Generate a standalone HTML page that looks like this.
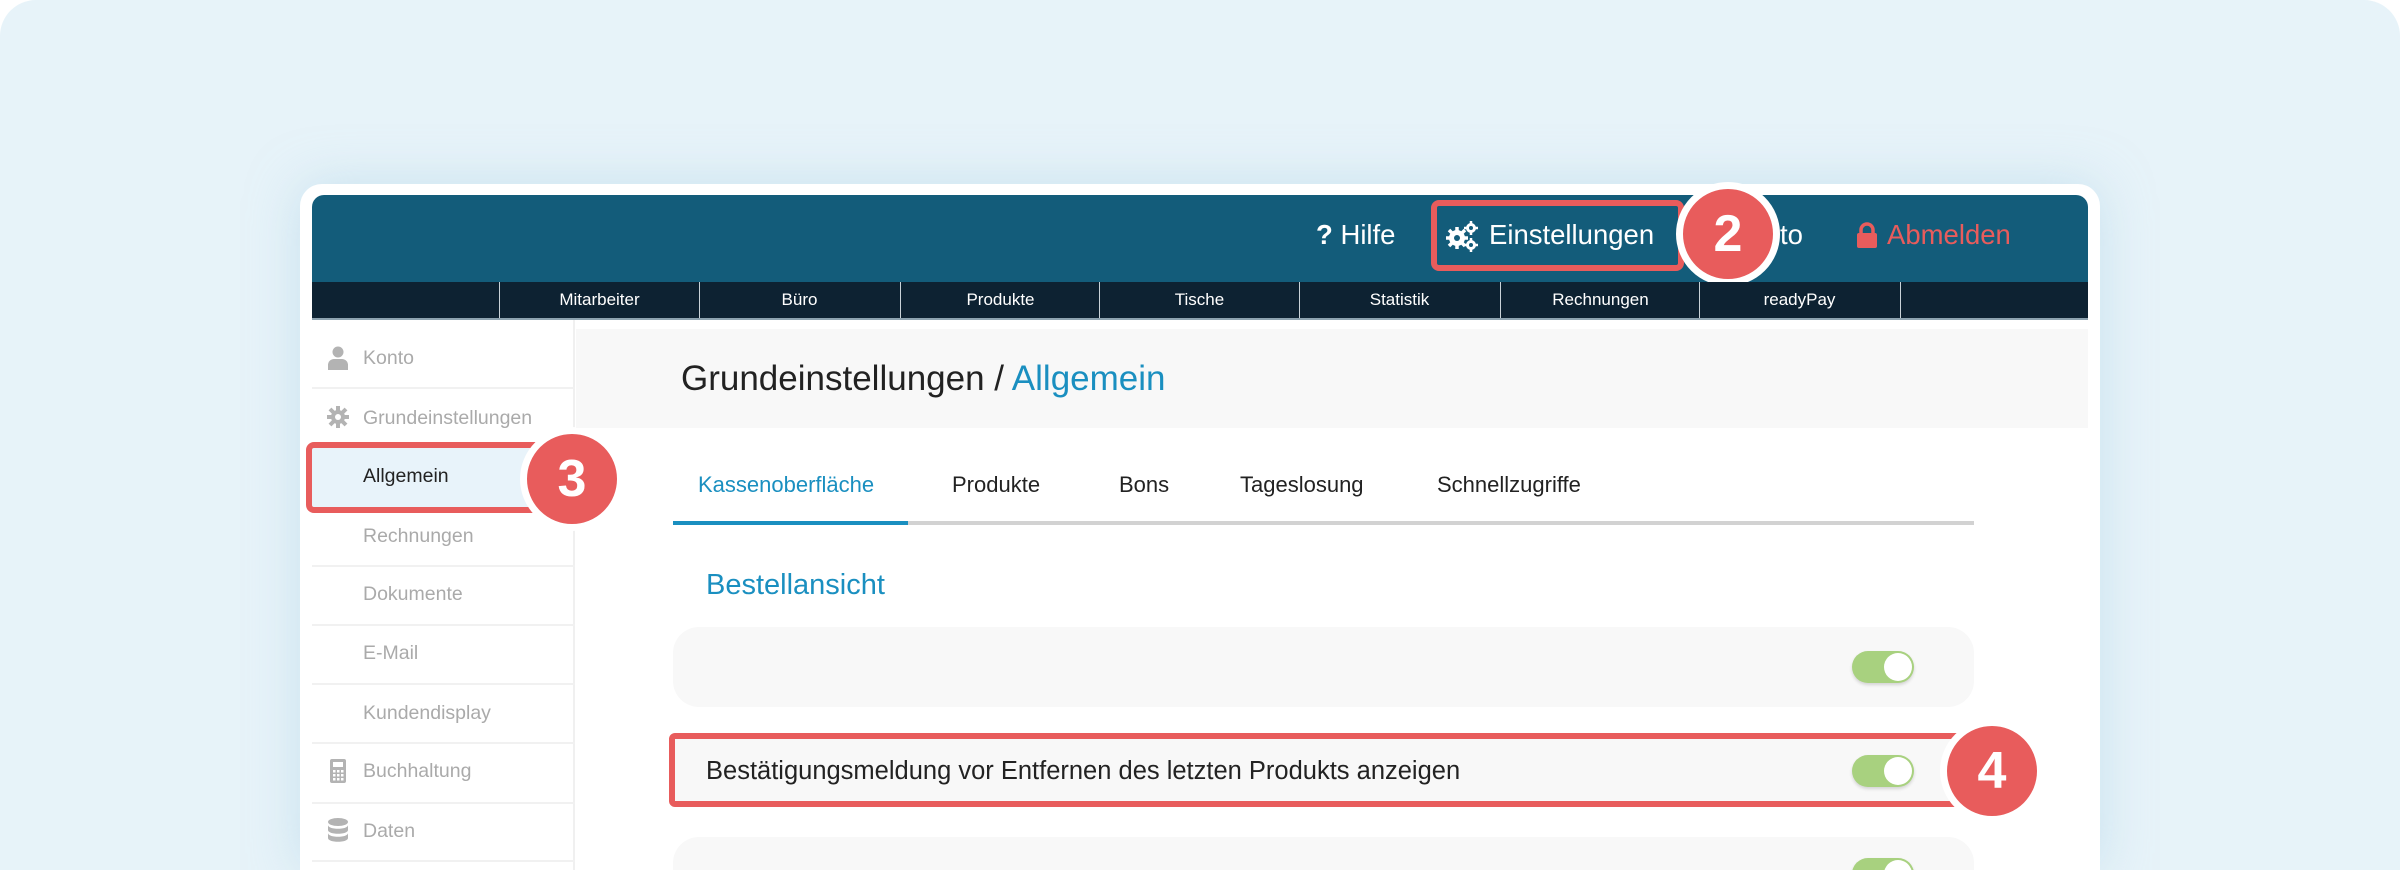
<!DOCTYPE html>
<html style="overflow:hidden"><head><meta charset="utf-8"><style>
*{box-sizing:border-box;margin:0;padding:0}
html,body{width:2400px;height:870px;overflow:hidden}
body{background:#fff;font-family:"Liberation Sans","DejaVu Sans",sans-serif}
#w{position:relative;width:2400px;height:870px;overflow:hidden}
.bg{position:absolute;left:0;top:0;width:2400px;height:870px;background:#e7f3f9;border-radius:36px 36px 0 0}
.card{position:absolute;left:300px;top:184px;width:1800px;height:686px;background:#fff;border-radius:22px 22px 0 0;box-shadow:0 0 50px rgba(170,210,230,.5)}
.hdr{position:absolute;left:312px;top:195px;width:1776px;height:88px;background:#135c7a;border-radius:12px 12px 0 0}
.nav{position:absolute;left:312px;top:282px;width:1776px;height:38px;background:#0d2232;border-bottom:2px solid #8da3b0}
.nav div{position:absolute;top:0;height:36px;width:200px;border-left:1.5px solid #c9d2d8;color:#fff;font-size:17px;text-align:center;line-height:36px}
.ht{position:absolute;top:218px;font-size:27.5px;color:#fff;line-height:34px}
.red{position:absolute;border:6px solid #e85c5c;border-radius:8px}
.circ{position:absolute;width:104px;height:104px;border-radius:50%;background:#e85c5c;border:7px solid #fff;color:#fff;font-weight:bold;font-size:52px;text-align:center;line-height:90px}
.side{position:absolute;left:312px;top:320px;width:263px;height:550px;border-right:2px solid #f0f0f0}
.si{position:absolute;left:363px;font-size:19.5px;color:#aaa;line-height:24px}
.sl{position:absolute;left:312px;width:263px;height:2px;background:#f1f1f1}
.title{position:absolute;left:576px;top:329px;width:1512px;height:99px;background:#f8f8f8}
.tab{position:absolute;top:471px;font-size:22px;color:#222;line-height:28px}
.row{position:absolute;left:673px;width:1301px;background:#f8f8f8;border-radius:26px}
.tog{position:absolute;width:62px;height:32px;border-radius:16px;background:#a8d17f;box-shadow:0 2px 3px rgba(0,0,0,.15)}
.tog:after{content:"";position:absolute;right:2px;top:2px;width:28px;height:28px;border-radius:50%;background:#fff}
</style></head><body><div id="w">
<div class="bg"></div>
<div class="card"></div>
<div class="hdr"></div>
<div class="ht" style="left:1316px"><b>?</b> Hilfe</div>
<svg style="position:absolute;left:1446px;top:220px" width="34" height="32" viewBox="0 0 34 32"><g fill="#fff"><circle cx="11" cy="18" r="8"/><circle cx="25" cy="8" r="5"/><circle cx="25" cy="25" r="5"/></g><g stroke="#fff" stroke-width="3.5"><path d="M11 7v22M0 18h22M3 10l16 16M3 26l16-16"/><path d="M25 1v14M18 8h14M25 18v14M18 25h14" stroke-width="2.5"/></g><circle cx="11" cy="18" r="3" fill="#135c7a"/><circle cx="25" cy="8" r="2" fill="#135c7a"/><circle cx="25" cy="25" r="2" fill="#135c7a"/></svg>
<div class="ht" style="left:1489px">Einstellungen</div>
<div class="ht" style="left:1780px">to</div>
<svg style="position:absolute;left:1856px;top:222px" width="22" height="26" viewBox="0 0 22 26"><path d="M5 12V8a6 6 0 0 1 12 0v4" stroke="#e85c5c" stroke-width="3.5" fill="none"/><rect x="1" y="11" width="20" height="15" rx="2" fill="#e85c5c"/></svg>
<div class="ht" style="left:1887px;color:#e85c5c">Abmelden</div>
<div class="red" style="left:1431px;top:200px;width:253px;height:71px"></div>
<div class="circ" style="left:1676px;top:182px">2</div>
<div class="nav">
<div style="left:187px">Mitarbeiter</div><div style="left:387px">Büro</div><div style="left:588px">Produkte</div><div style="left:787px">Tische</div><div style="left:987px">Statistik</div><div style="left:1188px">Rechnungen</div><div style="left:1387px">readyPay</div><div style="left:1588px;width:1px"></div>
</div>
<div class="side"></div>
<div class="sl" style="top:387px"></div><div class="sl" style="top:565px"></div><div class="sl" style="top:624px"></div><div class="sl" style="top:683px"></div><div class="sl" style="top:742px"></div><div class="sl" style="top:802px"></div><div class="sl" style="top:860px"></div>
<svg style="position:absolute;left:328px;top:346px" width="20" height="24" viewBox="0 0 20 24"><circle cx="10" cy="6" r="5.5" fill="#b3b3b3"/><path d="M0 24v-5a6 6 0 0 1 6-6h8a6 6 0 0 1 6 6v5z" fill="#b3b3b3"/></svg>
<div class="si" style="top:346px">Konto</div>
<svg style="position:absolute;left:327px;top:406px" width="22" height="22" viewBox="0 0 22 22"><circle cx="11" cy="11" r="7" fill="#b3b3b3"/><path d="M11 0v22M0 11h22M3 3l16 16M3 19l16-16" stroke="#b3b3b3" stroke-width="4"/><circle cx="11" cy="11" r="3" fill="#fff"/></svg>
<div class="si" style="top:406px">Grundeinstellungen</div>
<div style="position:absolute;left:312px;top:448px;width:230px;height:60px;background:#e8f3fa"></div>
<div class="red" style="left:306px;top:442px;width:246px;height:71px"></div>
<div class="si" style="top:464px;color:#222">Allgemein</div>
<div class="si" style="top:524px">Rechnungen</div>
<div class="si" style="top:582px">Dokumente</div>
<div class="si" style="top:641px">E-Mail</div>
<div class="si" style="top:701px">Kundendisplay</div>
<svg style="position:absolute;left:330px;top:759px" width="16" height="24" viewBox="0 0 16 24"><rect width="16" height="24" rx="2" fill="#b3b3b3"/><rect x="3" y="3" width="10" height="5" fill="#fff"/><g fill="#fff"><rect x="3" y="11" width="2.5" height="2.5"/><rect x="7" y="11" width="2.5" height="2.5"/><rect x="11" y="11" width="2.5" height="2.5"/><rect x="3" y="15" width="2.5" height="2.5"/><rect x="7" y="15" width="2.5" height="2.5"/><rect x="11" y="15" width="2.5" height="2.5"/><rect x="3" y="19" width="2.5" height="2.5"/><rect x="7" y="19" width="2.5" height="2.5"/><rect x="11" y="19" width="2.5" height="2.5"/></g></svg>
<div class="si" style="top:759px">Buchhaltung</div>
<svg style="position:absolute;left:328px;top:818px" width="20" height="24" viewBox="0 0 20 24"><ellipse cx="10" cy="4" rx="10" ry="4" fill="#b3b3b3"/><path d="M0 7c0 5 20 5 20 0v5c0 5-20 5-20 0zM0 15c0 5 20 5 20 0v5c0 5-20 5-20 0z" fill="#b3b3b3"/></svg>
<div class="si" style="top:819px">Daten</div>
<div class="circ" style="left:520px;top:427px">3</div>
<div class="title"></div>
<div style="position:absolute;left:681px;top:358px;font-size:35px;color:#222;line-height:42px">Grundeinstellungen / <span style="color:#1a8fc0">Allgemein</span></div>
<div class="tab" style="left:698px;color:#1a8fc0">Kassenoberfläche</div>
<div class="tab" style="left:952px">Produkte</div>
<div class="tab" style="left:1119px">Bons</div>
<div class="tab" style="left:1240px">Tageslosung</div>
<div class="tab" style="left:1437px">Schnellzugriffe</div>
<div style="position:absolute;left:673px;top:521px;width:1301px;height:4px;background:#d2d2d2"></div>
<div style="position:absolute;left:673px;top:521px;width:235px;height:4px;background:#1a8fc0"></div>
<div style="position:absolute;left:706px;top:568px;font-size:29px;color:#1a8fc0;line-height:34px">Bestellansicht</div>
<div class="row" style="top:627px;height:80px"></div>
<div class="tog" style="left:1852px;top:651px"></div>
<div class="row" style="top:739px;height:66px;border-radius:0"></div>
<div class="red" style="left:669px;top:733px;width:1320px;height:74px;border-radius:6px"></div>
<div style="position:absolute;left:706px;top:756px;font-size:25.5px;color:#222;line-height:30px">Bestätigungsmeldung vor Entfernen des letzten Produkts anzeigen</div>
<div class="tog" style="left:1852px;top:755px"></div>
<div class="circ" style="left:1940px;top:719px">4</div>
<div class="row" style="top:837px;height:33px;border-radius:26px 26px 0 0"></div>
<div style="position:absolute;left:1850px;top:856px;width:68px;height:14px;overflow:hidden"><div class="tog" style="left:2px;top:2px"></div></div>
</div></body></html>
